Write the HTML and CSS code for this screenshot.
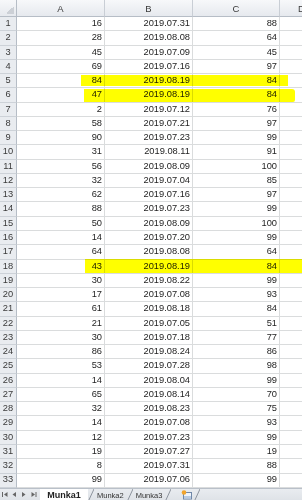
FILE: index.html
```html
<!DOCTYPE html>
<html lang="hu">
<head>
    <meta charset="UTF-8">
    <meta name="viewport" content="width=device-width, initial-scale=1.0">
    <title>Munka1</title>
    <link rel="stylesheet" href="styles.css">
</head>
<body>

    <div class="sheet">
        <table class="grid">
            <colgroup>
                <col class="c-hdr"><col class="c-a"><col class="c-b"><col class="c-c"><col class="c-d">
            </colgroup>
            <thead>
                <tr><th class="corner"></th><th>A</th><th>B</th><th>C</th><th class="cut">D</th></tr>
            </thead>
            <tbody>
                <tr><th>1</th><td>16</td><td>2019.07.31</td><td>88</td><td></td></tr>
                <tr><th>2</th><td>28</td><td>2019.08.08</td><td>64</td><td></td></tr>
                <tr><th>3</th><td>45</td><td>2019.07.09</td><td>45</td><td></td></tr>
                <tr><th>4</th><td>69</td><td>2019.07.16</td><td>97</td><td></td></tr>
                <tr><th>5</th><td>84</td><td>2019.08.19</td><td>84</td><td></td></tr>
                <tr><th>6</th><td>47</td><td>2019.08.19</td><td>84</td><td></td></tr>
                <tr><th>7</th><td>2</td><td>2019.07.12</td><td>76</td><td></td></tr>
                <tr><th>8</th><td>58</td><td>2019.07.21</td><td>97</td><td></td></tr>
                <tr><th>9</th><td>90</td><td>2019.07.23</td><td>99</td><td></td></tr>
                <tr><th>10</th><td>31</td><td>2019.08.11</td><td>91</td><td></td></tr>
                <tr><th>11</th><td>56</td><td>2019.08.09</td><td>100</td><td></td></tr>
                <tr><th>12</th><td>32</td><td>2019.07.04</td><td>85</td><td></td></tr>
                <tr><th>13</th><td>62</td><td>2019.07.16</td><td>97</td><td></td></tr>
                <tr><th>14</th><td>88</td><td>2019.07.23</td><td>99</td><td></td></tr>
                <tr><th>15</th><td>50</td><td>2019.08.09</td><td>100</td><td></td></tr>
                <tr><th>16</th><td>14</td><td>2019.07.20</td><td>99</td><td></td></tr>
                <tr><th>17</th><td>64</td><td>2019.08.08</td><td>64</td><td></td></tr>
                <tr><th>18</th><td>43</td><td>2019.08.19</td><td>84</td><td></td></tr>
                <tr><th>19</th><td>30</td><td>2019.08.22</td><td>99</td><td></td></tr>
                <tr><th>20</th><td>17</td><td>2019.07.08</td><td>93</td><td></td></tr>
                <tr><th>21</th><td>61</td><td>2019.08.18</td><td>84</td><td></td></tr>
                <tr><th>22</th><td>21</td><td>2019.07.05</td><td>51</td><td></td></tr>
                <tr><th>23</th><td>30</td><td>2019.07.18</td><td>77</td><td></td></tr>
                <tr><th>24</th><td>86</td><td>2019.08.24</td><td>86</td><td></td></tr>
                <tr><th>25</th><td>53</td><td>2019.07.28</td><td>98</td><td></td></tr>
                <tr><th>26</th><td>14</td><td>2019.08.04</td><td>99</td><td></td></tr>
                <tr><th>27</th><td>65</td><td>2019.08.14</td><td>70</td><td></td></tr>
                <tr><th>28</th><td>32</td><td>2019.08.23</td><td>75</td><td></td></tr>
                <tr><th>29</th><td>14</td><td>2019.07.08</td><td>93</td><td></td></tr>
                <tr><th>30</th><td>12</td><td>2019.07.23</td><td>99</td><td></td></tr>
                <tr><th>31</th><td>19</td><td>2019.07.27</td><td>19</td><td></td></tr>
                <tr><th>32</th><td>8</td><td>2019.07.31</td><td>88</td><td></td></tr>
                <tr><th>33</th><td>99</td><td>2019.07.06</td><td>99</td><td></td></tr>
            </tbody>
        </table>

        <!-- highlighter marks drawn over the rows -->
        <div class="mark mark-5"></div>
        <div class="mark mark-6"></div>
        <div class="mark mark-18"></div>
    </div>

    <div class="tabs">
        <div class="nav">
            <svg width="40" height="10" viewBox="0 0 40 10">
                <rect x="2" y="2" width="1" height="5" fill="#666"/>
                <polygon points="7.5,2 4,4.5 7.5,7" fill="#666"/>
                <polygon points="16,2 12.5,4.5 16,7" fill="#666"/>
                <polygon points="22,2 25.5,4.5 22,7" fill="#666"/>
                <polygon points="31.5,2 35,4.5 31.5,7" fill="#666"/>
                <rect x="35.5" y="2" width="1" height="5" fill="#666"/>
            </svg>
        </div>
        <div class="tab active">Munka1</div>
        <svg class="sep" width="6" height="13" viewBox="0 0 6 13"><line x1="0" y1="13" x2="6" y2="0" stroke="#8d949e"/></svg>
        <div class="tab">Munka2</div>
        <svg class="sep" width="6" height="13" viewBox="0 0 6 13"><line x1="0" y1="13" x2="6" y2="0" stroke="#8d949e"/></svg>
        <div class="tab">Munka3</div>
        <svg class="sep" width="6" height="13" viewBox="0 0 6 13"><line x1="0" y1="13" x2="6" y2="0" stroke="#8d949e"/></svg>
        <div class="tab add">
            <svg width="11" height="10" viewBox="0 0 11 10">
                <rect x="2.5" y="2.5" width="8" height="6.5" fill="#eef3fa" stroke="#6f87a8"/>
                <rect x="3" y="6" width="7" height="2.5" fill="#b9cbe3"/>
                <circle cx="3" cy="2.5" r="2.3" fill="#f2a42c"/>
            </svg>
        </div>
        <svg class="sep" width="6" height="13" viewBox="0 0 6 13"><line x1="0" y1="13" x2="6" y2="0" stroke="#8d949e"/></svg>
    </div>

</body>
</html>
```

FILE: styles.css
```css
*{
    margin: 0;
    padding: 0;
    box-sizing: border-box;
}
body{
    width: 302px;
    height: 500px;
    overflow: hidden;
    background-color: #fff;
    font-family: "Liberation Sans", Arial, sans-serif;
    color: #1e1e1e;
}
.sheet{
    position: relative;
}
.grid{
    border-collapse: separate;
    border-spacing: 0;
    table-layout: fixed;
    width: 302px;
}
.c-hdr{ width: 17px; }
.c-a{ width: 88px; }
.c-b{ width: 88px; }
.c-c{ width: 87px; }
.c-d{ width: 22px; }

.grid thead th{
    height: 17px;
    background: linear-gradient(#f7f8fa, #e6e9ee);
    border-right: 1px solid #c9ced5;
    border-bottom: 1px solid #b6bdc6;
    font-weight: normal;
    font-size: 9.5px;
    color: #3a3a3a;
    text-align: center;
}
/* column D is cut off by the window edge, only its first sliver shows */
.grid thead th.cut{
    text-align: left;
    padding-left: 18px;
    overflow: hidden;
    white-space: nowrap;
    border-right: none;
}
.grid thead th.corner{
    background:
        linear-gradient(135deg, transparent 50%, #ccd0d6 50%) no-repeat right 2px bottom 2px / 8px 8px,
        linear-gradient(#f7f8fa, #e6e9ee);
    border-right-color: #b6bdc6;
}
.grid tbody tr{
    height: 14.28px;
}
.grid tbody th{
    background-color: #e9ecf0;
    border-right: 1px solid #b6bdc6;
    border-bottom: 1px solid #cdd2d8;
    font-weight: normal;
    font-size: 9.3px;
    color: #3a3a3a;
    text-align: center;
    line-height: 1;
}
.grid td{
    border-right: 1px solid #dadcdd;
    border-bottom: 1px solid #dadcdd;
    text-align: right;
    padding-right: 2px;
    font-size: 9.3px;
    line-height: 1;
    white-space: nowrap;
    overflow: hidden;
}
.grid td:last-child{
    border-right: none;
}

.mark{
    position: absolute;
    background-color: #ffff00;
    mix-blend-mode: multiply;
    pointer-events: none;
}
.mark-5{
    left: 81px;
    top: 75px;
    width: 207px;
    height: 11px;
}
.mark-6{
    left: 84px;
    top: 89px;
    width: 211px;
    height: 13px;
    border-radius: 0 3px 2px 0;
}
.mark-18{
    left: 85px;
    top: 259px;
    width: 217px;
    height: 14px;
}

.tabs{
    display: flex;
    align-items: stretch;
    height: 14px;
    background: linear-gradient(#e9ecf0, #dde1e6);
    border-top: 1px solid #b9c0c9;
    font-size: 7.5px;
    color: #333;
}
.tabs .nav{
    width: 40px;
    display: flex;
    align-items: center;
}
.tabs .tab{
    display: flex;
    align-items: center;
    justify-content: center;
    padding: 0 3px;
}
.tabs .tab.active{
    width: 48px;
    background-color: #fff;
    font-weight: bold;
    font-size: 9px;
    color: #222;
}
.tabs .tab.add{
    padding: 0 2px 0 10px;
}
.tabs .sep{
    flex-shrink: 0;
}
```
